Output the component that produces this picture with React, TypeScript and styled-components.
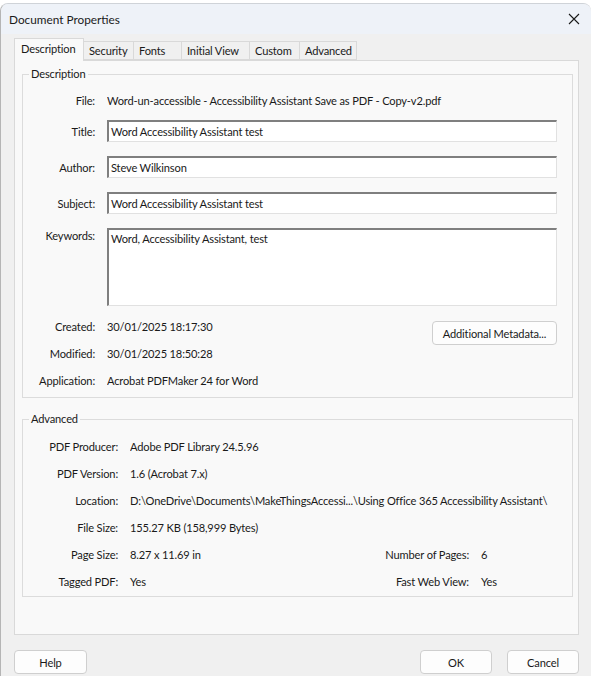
import React from "react";
import styled, { createGlobalStyle } from "styled-components";

const GlobalStyle = createGlobalStyle`
  html, body { margin: 0; padding: 0; background: #ffffff; }
  body {
    font-family: "Lato", "Noto Sans", sans-serif;
    font-size: 11.1px;
    letter-spacing: -0.16px;
    color: #1a1a1a;
  }
  * { box-sizing: border-box; }
`;

const Window = styled.div`
  margin-top: 3px;
  width: 591px;
  height: 673px;
  background: #f0f0f0;
  border-left: 1px solid #b5b5b5;
  border-top: 1px solid #cfd3d8;
  border-radius: 8px 8px 0 0;
  overflow: hidden;
  display: flex;
  flex-direction: column;
`;

const TitleBar = styled.div`
  height: 30px;
  flex: none;
  background: #eef2f8;
  display: flex;
  align-items: center;
  justify-content: space-between;
  padding: 0 8px 0 8px;
`;

const TitleText = styled.span`
  font-size: 11.8px;
  letter-spacing: 0;
  color: #1a1a1a;
`;

const CloseButton = styled.span`
  width: 16px;
  height: 16px;
  display: flex;
  align-items: center;
  justify-content: center;
  margin-right: 1px;
`;

const Body = styled.div`
  flex: 1;
  display: flex;
  flex-direction: column;
  padding: 4px 12px 0 13px;
`;

const TabStrip = styled.div`
  display: flex;
  align-items: flex-end;
  height: 22px;
  position: relative;
  z-index: 1;
`;

const Tab = styled.div<{ $active?: boolean; $w: number }>`
  width: ${(p) => p.$w}px;
  height: ${(p) => (p.$active ? "23px" : "19px")};
  margin-bottom: ${(p) => (p.$active ? "-1px" : "0")};
  padding: ${(p) => (p.$active ? "0 0 3px 6px" : "0 0 0 5px")};
  display: flex;
  align-items: center;
  background: ${(p) => (p.$active ? "#f9f9f9" : "#f0f0f0")};
  border: 1px solid #d9d9d9;
  border-bottom: ${(p) => (p.$active ? "none" : "1px solid #d9d9d9")};
  border-left: ${(p) => (p.$active ? "1px solid #d9d9d9" : "none")};
  white-space: nowrap;
  flex: none;
`;

const Panel = styled.div`
  height: 575px;
  flex: none;
  background: #f9f9f9;
  border: 1px solid #d9d9d9;
  padding: 5px 5px 0 7px;
  display: flex;
  flex-direction: column;
  gap: 13px;
`;

const Group = styled.fieldset<{ $pad?: string }>`
  margin: 0;
  min-width: 0;
  border: 1px solid #dcdcdc;
  padding: ${(p) => p.$pad || "5px 15px 3px 0"};
  display: flex;
  flex-direction: column;
`;

const Legend = styled.legend`
  margin-left: 6px;
  padding: 0 2px;
  line-height: 16px;
`;

const FieldRow = styled.div<{ $h?: number; $mt?: number }>`
  display: flex;
  align-items: center;
  height: ${(p) => p.$h ?? 27}px;
  margin-top: ${(p) => p.$mt ?? 0}px;
`;

const TopRow = styled(FieldRow)`
  align-items: flex-start;
`;

const Label = styled.span<{ $w: number }>`
  width: ${(p) => p.$w}px;
  flex: none;
  text-align: right;
  margin-right: 12px;
  white-space: nowrap;
`;

const TopLabel = styled(Label)`
  margin-top: 1px;
`;

const Value = styled.span`
  white-space: nowrap;
  flex: 1;
  overflow: hidden;
`;

const TextBox = styled.div`
  flex: 1;
  align-self: stretch;
  background: #ffffff;
  border-top: 2px solid #7f7f7f;
  border-left: 2px solid #7f7f7f;
  border-right: 1px solid #e1e1e1;
  border-bottom: 1px solid #e1e1e1;
  padding: 0 2px;
  display: flex;
  align-items: center;
  white-space: nowrap;
`;

const TextArea = styled(TextBox)`
  align-items: flex-start;
  padding-top: 2px;
`;

const Spacer = styled.div`
  flex: 1;
`;

const Button = styled.button<{ $w: number }>`
  width: ${(p) => p.$w}px;
  height: 24px;
  flex: none;
  background: #fdfdfd;
  border: 1px solid #cfcfcf;
  border-radius: 4px;
  font-family: inherit;
  font-size: inherit;
  letter-spacing: inherit;
  color: #1a1a1a;
  padding: 0;
  display: flex;
  align-items: center;
  justify-content: center;
  white-space: nowrap;
`;

const MetaButton = styled(Button)`
  align-self: flex-start;
  margin-top: 8px;
`;

const SplitRow = styled.div`
  display: grid;
  grid-template-columns: 95px 1fr 111px 76px;
  column-gap: 12px;
  align-items: center;
  height: 27px;
`;

const SplitLabel = styled.span`
  text-align: right;
  white-space: nowrap;
`;

const Footer = styled.div`
  display: flex;
  align-items: center;
  padding-top: 15px;
  gap: 15px;
`;

type Pair = [string, string];

const advancedRows: Pair[] = [
  ["PDF Producer:", "Adobe PDF Library 24.5.96"],
  ["PDF Version:", "1.6 (Acrobat 7.x)"],
  ["Location:", "D:\\OneDrive\\Documents\\MakeThingsAccessi...\\Using Office 365 Accessibility Assistant\\"],
  ["File Size:", "155.27 KB (158,999 Bytes)"],
];

const tabs: [string, number][] = [
  ["Description", 70],
  ["Security", 50],
  ["Fonts", 48],
  ["Initial View", 68],
  ["Custom", 50],
  ["Advanced", 57],
];

const CloseIcon = () => (
  <svg width="12" height="12" viewBox="0 0 12 12">
    <path d="M1 1 L11 11 M11 1 L1 11" stroke="#1a1a1a" strokeWidth="1.1" fill="none" />
  </svg>
);

export default function App() {
  return (
    <>
      <GlobalStyle />
      <Window>
        <TitleBar>
          <TitleText>Document Properties</TitleText>
          <CloseButton>
            <CloseIcon />
          </CloseButton>
        </TitleBar>
        <Body>
          <TabStrip>
            {tabs.map(([t, w], i) => (
              <Tab key={t} $active={i === 0} $w={w}>
                {t}
              </Tab>
            ))}
          </TabStrip>
          <Panel>
            <Group>
              <Legend>Description</Legend>
              <FieldRow $h={27}>
                <Label $w={72}>File:</Label>
                <Value>Word-un-accessible - Accessibility Assistant Save as PDF - Copy-v2.pdf</Value>
              </FieldRow>
              <FieldRow $h={22} $mt={6}>
                <Label $w={72}>Title:</Label>
                <TextBox>Word Accessibility Assistant test</TextBox>
              </FieldRow>
              <FieldRow $h={22} $mt={14}>
                <Label $w={72}>Author:</Label>
                <TextBox>Steve Wilkinson</TextBox>
              </FieldRow>
              <FieldRow $h={22} $mt={14}>
                <Label $w={72}>Subject:</Label>
                <TextBox>Word Accessibility Assistant test</TextBox>
              </FieldRow>
              <TopRow $h={78} $mt={14}>
                <TopLabel $w={72}>Keywords:</TopLabel>
                <TextArea>Word, Accessibility Assistant, test</TextArea>
              </TopRow>
              <FieldRow $h={27} $mt={7}>
                <Label $w={72}>Created:</Label>
                <Value>30/01/2025 18:17:30</Value>
                <Spacer />
                <MetaButton $w={125}>Additional Metadata...</MetaButton>
              </FieldRow>
              <FieldRow $h={27}>
                <Label $w={72}>Modified:</Label>
                <Value>30/01/2025 18:50:28</Value>
              </FieldRow>
              <FieldRow $h={27}>
                <Label $w={72}>Application:</Label>
                <Value>Acrobat PDFMaker 24 for Word</Value>
              </FieldRow>
            </Group>
            <Group $pad="6px 15px 1px 0">
              <Legend>Advanced</Legend>
              {advancedRows.map(([l, v]) => (
                <FieldRow key={l} $h={27}>
                  <Label $w={95}>{l}</Label>
                  <Value>{v}</Value>
                </FieldRow>
              ))}
              <SplitRow>
                <SplitLabel>Page Size:</SplitLabel>
                <span>8.27 x 11.69 in</span>
                <SplitLabel>Number of Pages:</SplitLabel>
                <span>6</span>
              </SplitRow>
              <SplitRow>
                <SplitLabel>Tagged PDF:</SplitLabel>
                <span>Yes</span>
                <SplitLabel>Fast Web View:</SplitLabel>
                <span>Yes</span>
              </SplitRow>
            </Group>
          </Panel>
          <Footer>
            <Button $w={73}>Help</Button>
            <Spacer />
            <Button $w={72}>OK</Button>
            <Button $w={72}>Cancel</Button>
          </Footer>
        </Body>
      </Window>
    </>
  );
}
